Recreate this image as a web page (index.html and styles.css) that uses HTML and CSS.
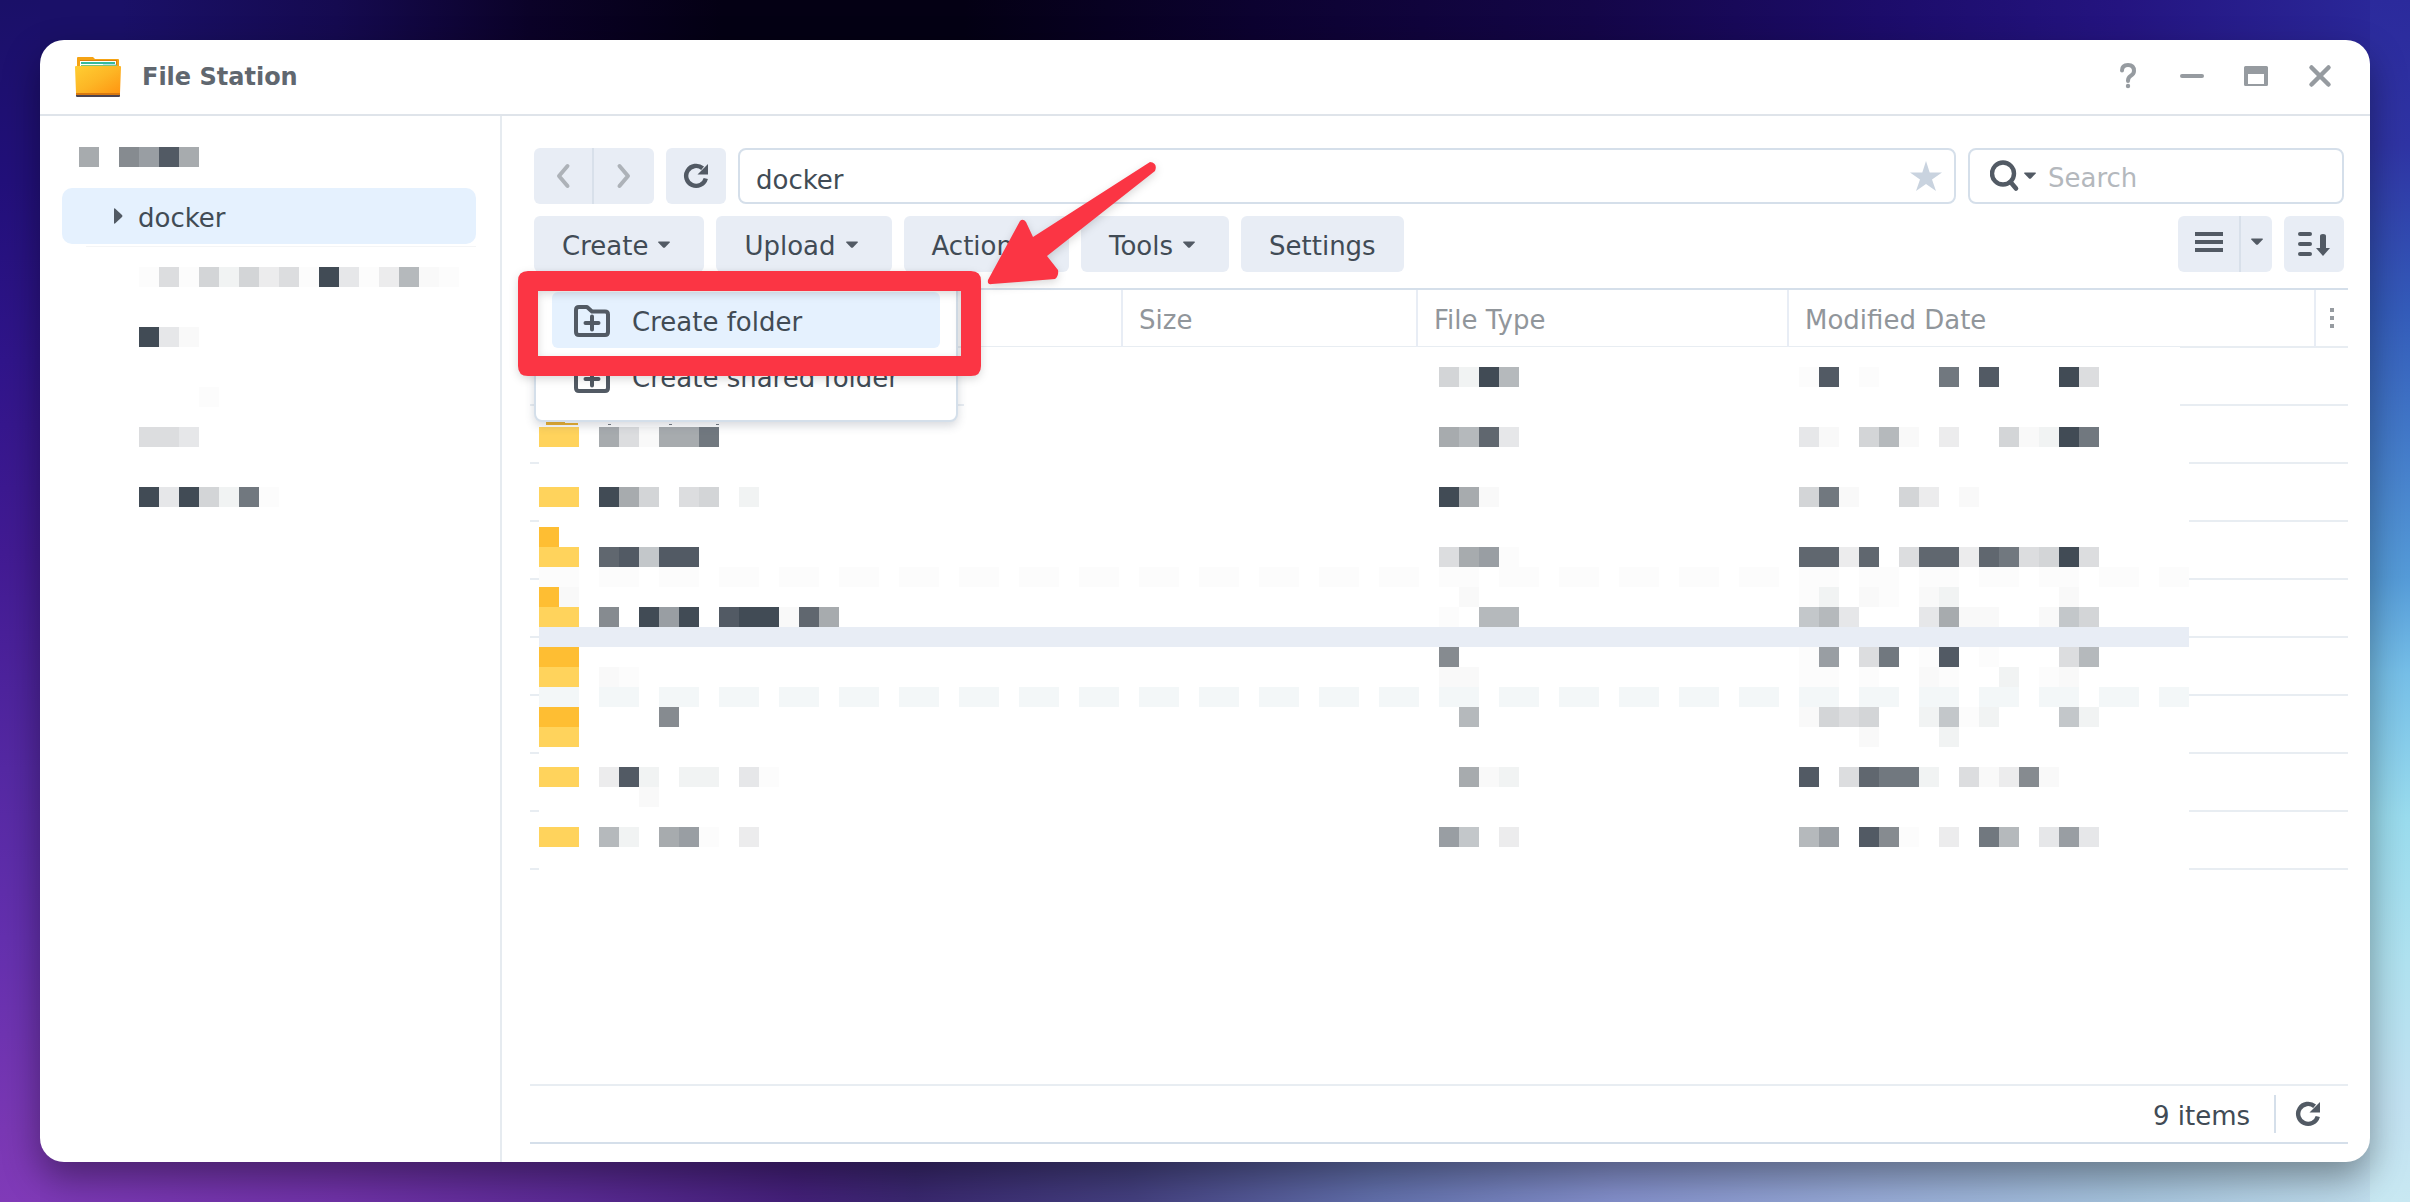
FILE: index.html
```html
<!DOCTYPE html>
<html lang="en">
<head>
<meta charset="utf-8">
<title>File Station</title>
<link rel="stylesheet" href="styles.css">
</head>
<body>
<svg class="defs" width="0" height="0" aria-hidden="true">
  <symbol id="caret" viewBox="0 0 12 8"><path d="M0 1.2Q0 .5 .8 .5H11.2Q12 .5 12 1.2L7.2 6.2Q6 7.2 4.8 6.2Z" fill="#525a64"/></symbol>
  <symbol id="reload" viewBox="0 0 26 26"><path d="M19.6 5.2A10 10 0 1 0 22.8 15.5" fill="none" stroke="#525a64" stroke-width="4.4"/><path d="M25 1V11.5H14.5Z" fill="#525a64"/></symbol>
  <symbol id="folder-plus" viewBox="0 0 36 32"><path d="M2 27V5Q2 2 5 2H13L18 6.500H31Q34 6.500 34 9.500V27Q34 30 31 30H5Q2 30 2 27Z" fill="none" stroke="#525a64" stroke-width="4" stroke-linejoin="round"/><path d="M18 11.500V24.500M11.500 18H24.500" stroke="#525a64" stroke-width="4" stroke-linecap="round"/></symbol>
</svg>

<div class="window">
  <header class="titlebar">
    <svg class="app-icon" viewBox="0 0 48 42" aria-hidden="true">
      <defs><linearGradient id="front" x1="0" y1="0" x2="1" y2="1"><stop offset="0" stop-color="#ffce33"/><stop offset=".5" stop-color="#fdb625"/><stop offset="1" stop-color="#ff9410"/></linearGradient></defs>
      <path d="M3 2Q3 1 4 1H19L21 3H44Q45 3 45 4V20H3Z" fill="#f5a314"/>
      <path d="M6 4H43V12H6Z" fill="#d97f0c"/>
      <path d="M6 5H42V12H6Z" fill="#fff"/><path d="M7 6H41V8H7Z" fill="#35b99b"/><path d="M7 9H43V12H7Z" fill="#7cc47a"/><path d="M29 8H42V9H29Z" fill="#b8e0ef"/>
      <path d="M2 37H46V40Q46 41 45 41H3Q2 41 2 40Z" fill="#4c4450"/>
      <path d="M1 11Q1 10 2 10H46Q47 10 47 11L46 37Q46 38 45 38H3Q2 38 2 37Z" fill="url(#front)"/>
      <path d="M2 37H46V39H2Z" fill="#d9790f"/>
    </svg>
    <h1 class="title">File Station</h1>
    <div class="controls">
      <button class="control" aria-label="Help"><svg viewBox="0 0 28 28"><path d="M8 8.500Q8 3 14 3T20 9Q20 12 16.500 14Q14 15.500 14 19" fill="none" stroke="#969ba0" stroke-width="4" stroke-linecap="round"/><circle cx="14" cy="24" r="2.200" fill="#969ba0"/></svg></button>
      <button class="control" aria-label="Minimize"><svg viewBox="0 0 28 28"><path d="M4 14H24" stroke="#969ba0" stroke-width="4" stroke-linecap="round"/></svg></button>
      <button class="control" aria-label="Maximize"><svg viewBox="0 0 28 28"><path fill-rule="evenodd" d="M3.500 4H24.500Q26 4 26 5.500V22.500Q26 24 24.500 24H3.500Q2 24 2 22.500V5.500Q2 4 3.500 4ZM6 12V22H22V12Z" fill="#969ba0"/></svg></button>
      <button class="control" aria-label="Close"><svg viewBox="0 0 28 28"><path d="M5.500 5.500L22.500 22.500M22.500 5.500L5.500 22.500" stroke="#969ba0" stroke-width="4.500" stroke-linecap="round"/></svg></button>
    </div>
  </header>

  <div class="content">
    <nav class="sidebar" aria-label="Folders">
      <svg class="mosaic root-name" width="120" height="20" data-mosaic="root"></svg>
      <a class="tree-item" href="#docker"><svg class="tree-arrow" viewBox="0 0 9 16" aria-hidden="true"><path d="M0 1Q0 0 1 .5L8 7Q9 8 8 9L1 15.500Q0 16 0 15Z" fill="#525a64"/></svg>docker</a>
      <div class="tree-line"></div>
      <svg class="mosaic child-names" width="320" height="240" data-mosaic="children"></svg>
    </nav>

    <main class="main">
      <div class="bar">
        <div class="split">
          <button class="icon-btn" aria-label="Back" disabled><svg width="16" height="26" viewBox="0 0 16 26"><path d="M12.500 3L4 13L12.500 23" fill="none" stroke="#adb2b8" stroke-width="4" stroke-linecap="round" stroke-linejoin="round"/></svg></button>
          <button class="icon-btn" aria-label="Forward" disabled><svg width="16" height="26" viewBox="0 0 16 26"><path d="M3.500 3L12 13L3.500 23" fill="none" stroke="#adb2b8" stroke-width="4" stroke-linecap="round" stroke-linejoin="round"/></svg></button>
        </div>
        <button class="icon-btn" aria-label="Refresh"><svg width="26" height="26"><use href="#reload"/></svg></button>
        <div class="field path">
          <input type="text" class="input" value="docker" aria-label="Path">
          <button class="star" aria-label="Add to favorites"><svg width="32" height="30" viewBox="0 0 32 30"><path d="M16 0L19.700 11.500H32L22 18.500L26 30L16 23L6 30L10 18.500L0 11.500H12.300Z" fill="#c9d3df"/></svg></button>
        </div>
        <div class="field search">
          <button class="search-btn" aria-label="Search options"><svg width="30" height="32" viewBox="0 0 30 32"><circle cx="13" cy="13.500" r="11" fill="none" stroke="#525a64" stroke-width="4.400"/><path d="M20.500 22L26 28.500" stroke="#525a64" stroke-width="4.600" stroke-linecap="round"/></svg><svg width="12" height="8"><use href="#caret"/></svg></button>
          <input type="text" class="input" placeholder="Search" aria-label="Search">
        </div>
      </div>

      <div class="bar">
        <div class="menu-wrap">
          <button class="btn">Create<svg class="caret"><use href="#caret"/></svg></button>
          <div class="menu">
            <button class="menu-item active"><svg width="36" height="32"><use href="#folder-plus"/></svg>Create folder</button>
            <button class="menu-item"><svg width="36" height="32"><use href="#folder-plus"/></svg>Create shared folder</button>
          </div>
        </div>
        <button class="btn">Upload<svg class="caret"><use href="#caret"/></svg></button>
        <button class="btn">Action<svg class="caret"><use href="#caret"/></svg></button>
        <button class="btn">Tools<svg class="caret"><use href="#caret"/></svg></button>
        <button class="btn">Settings</button>
        <div class="split view">
          <button class="icon-btn" aria-label="List view"><svg width="28" height="20" viewBox="0 0 28 20"><path d="M0 2H28M0 10H28M0 18H28" stroke="#525a64" stroke-width="4"/></svg></button>
          <button class="icon-btn narrow" aria-label="Choose view"><svg width="12" height="8"><use href="#caret"/></svg></button>
        </div>
        <button class="icon-btn" aria-label="Sort"><svg width="32" height="26" viewBox="0 0 32 26"><path d="M2 3H12M2 13H12M2 23H12" stroke="#525a64" stroke-width="4" stroke-linecap="round"/><path d="M22 5Q22 3 25 3T28 5V17H32L25 25L18 17H22Z" fill="#525a64"/></svg></button>
      </div>

      <div class="list">
        <table class="files">
          <colgroup><col class="c-name"><col class="c-size"><col class="c-type"><col class="c-date"><col class="c-more"></colgroup>
          <thead><tr>
            <th aria-label="Name"></th><th>Size</th><th>File Type</th><th>Modified Date</th>
            <th class="more"><svg width="4" height="20" viewBox="0 0 4 20" role="img" aria-label="Columns"><path d="M0 0H4V4H0ZM0 8H4V12H0ZM0 16H4V20H0Z" fill="#969ba0"/></svg></th>
          </tr></thead>
          <tbody>
            <tr><td colspan="5"></td></tr><tr><td colspan="5"></td></tr><tr><td colspan="5"></td></tr>
            <tr><td colspan="5"></td></tr><tr><td colspan="5"></td></tr><tr><td colspan="5"></td></tr>
            <tr><td colspan="5"></td></tr><tr><td colspan="5"></td></tr><tr><td colspan="5"></td></tr>
          </tbody>
        </table>
        <svg class="mosaic file-names" width="1650" height="540" data-mosaic="files">
          <path d="M425 0H1641V80H1650V540H0V80H425Z" fill="#fff"/>
          <path d="M7 74H24L26 76H39V78H7Z" fill="#e9ae2c"/>
          <path d="M69 77H72M130 77H133M177 77H180" stroke="#71787f" stroke-width="1"/>
        </svg>
      </div>

      <footer class="status">
        <span class="count">9 items</span>
        <button class="reload" aria-label="Reload"><svg width="26" height="26"><use href="#reload"/></svg></button>
      </footer>

      <svg class="annotation" width="680" height="280" viewBox="0 0 680 280" aria-hidden="true">
        <path fill-rule="evenodd" d="M26 155H469Q479 155 479 165V250Q479 260 469 260H26Q16 260 16 250V165Q16 155 26 155ZM36 175V240H459V175Z"/>
        <path d="M648 46Q656 47 653 55L545 140L556 154Q557 160 553 163L490 168Q485 169 486 164L518 105Q521 102 524 106L531 121Z"/>
      </svg>
    </main>
  </div>
</div>
<script src="mosaic.js"></script>
</body>
</html>
```
FILE: styles.css
```css
* { box-sizing: border-box; }

body {
  margin: 0;
  min-height: 100vh;
  padding: 40px;
  display: flex;
  font-family: "DejaVu Sans", Verdana, sans-serif;
  font-size: 26px;
  line-height: 32px;
  color: #414b55;
  background:
    linear-gradient(180deg, #1a1068, #22107a 15%, #30158a 30%, #421b93 46%, #5529a3 64%, #6430ae 78%, #7a38b4 94%, #803ab8) left top / 40px 100% no-repeat,
    linear-gradient(180deg, #2b2a9c, #2f34a4 12%, #345cba 26%, #4278c8 36%, #559bd8 48%, #76bfe8 56%, #9adcee 68%, #b0e2f0 80%, #c2e2f2 92%, #c8e8f2) right top / 40px 100% no-repeat,
    linear-gradient(90deg, #1a1068, #1a1068 5%, #150a50 14%, #0b0228 22%, #040014 30%, #040014 40%, #0c0230 52%, #140648 66%, #1c0c6a 78%, #241480 88%, #2b2a9c) left top / 100% 50% no-repeat,
    linear-gradient(90deg, #7e3ab8, #7032a8 14%, #5a2a94 24%, #44207a 33%, #3a2870 38%, #444080 47%, #6270ac 57%, #8490cc 67%, #98acd8 78%, #a6c4de 88%, #c4e2f0) left bottom / 100% 50% no-repeat;
}

h1 { margin: 0; }

button, input {
  margin: 0;
  padding: 0;
  border: 0;
  background: none;
  font: inherit;
  color: inherit;
}

svg { display: block; flex: none; }
.defs { position: absolute; }

.window {
  flex: 1;
  min-width: 0;
  display: flex;
  flex-direction: column;
  background: #fff;
  border-radius: 24px;
  box-shadow: 0 16px 36px rgba(0, 0, 0, .38);
}

.titlebar {
  display: flex;
  align-items: center;
  height: 76px;
  padding: 0 34px;
  border-bottom: 2px solid #dfe4ea;
}
.app-icon { width: 48px; height: 42px; }
.title {
  flex: 1;
  margin-left: 20px;
  font-size: 24px;
  color: #60676f;
}
.controls { display: flex; gap: 36px; margin: 0 2px 2px 0; }
.control { width: 28px; height: 28px; }

.content { flex: 1; display: flex; }

.sidebar {
  width: 462px;
  flex: none;
  padding: 31px 24px 0 22px;
  border-right: 2px solid #e6ebf0;
}
.root-name { margin-left: 17px; }
.tree-item {
  display: flex;
  align-items: center;
  gap: 15px;
  height: 56px;
  margin-top: 21px;
  padding: 3px 0 0 52px;
  border-radius: 10px;
  background: #e5f1fe;
  color: inherit;
  text-decoration: none;
}
.tree-arrow { width: 9px; height: 16px; margin-bottom: 4px; }
.tree-line { height: 1px; margin: 2px 0 0 24px; background: #f4f5f6; }
.child-names { margin: 20px 0 0 77px; }

.main {
  position: relative;
  flex: 1;
  min-width: 0;
  display: flex;
  flex-direction: column;
  padding: 32px 22px 18px 28px;
}

.bar { display: flex; gap: 12px; margin: 0 4px 12px; }
.split { display: flex; }
.btn, .icon-btn {
  display: flex;
  align-items: center;
  justify-content: center;
  height: 56px;
  border-radius: 6px;
  background: #e8edf5;
}
.btn { gap: 10px; padding: 3px 28px 0; }
.caret { width: 12px; height: 8px; margin: 0 6px 2px 0; }
.icon-btn { width: 60px; }
.split .icon-btn:first-child { border-radius: 6px 0 0 6px; border-right: 2px solid #d8e0ea; }
.split .icon-btn:last-child { border-radius: 0 6px 6px 0; }
.view { margin-left: auto; }
.view .icon-btn:first-child { width: 63px; }
.view .narrow { width: 31px; }
.view svg { margin-bottom: 4px; }

.field {
  display: flex;
  align-items: center;
  height: 56px;
  border: 2px solid #d5dfea;
  border-radius: 8px;
}
.path { flex: 1; padding: 0 12px 0 16px; }
.path .input { padding-top: 7px; }
.search { width: 376px; padding: 0 20px; }
.input { flex: 1; min-width: 0; height: 100%; padding-top: 3px; outline: none; }
.input::placeholder { color: #b4b8bd; opacity: 1; }
.search-btn { display: flex; align-items: center; gap: 4px; margin-right: 12px; }

.menu-wrap { position: relative; }
.menu {
  position: absolute;
  z-index: 2;
  left: 0;
  top: 58px;
  width: 424px;
  padding: 16px;
  border: 2px solid #d4dfea;
  border-radius: 8px;
  background: #fff;
  box-shadow: 0 4px 10px rgba(60, 70, 90, .2);
}
.menu-item {
  display: flex;
  align-items: center;
  gap: 22px;
  width: 100%;
  height: 56px;
  padding: 3px 22px 0;
  border-radius: 6px;
  white-space: nowrap;
}
.menu-item svg { margin-bottom: 2px; }
.menu-item.active { background: #e5f1fe; }

.list { position: relative; flex: 1; margin-top: 4px; }
.files {
  width: 100%;
  table-layout: fixed;
  border-collapse: separate;
  border-spacing: 0;
  border-top: 2px solid #d5dfea;
}
.c-name { width: 593px; }
.c-size { width: 295px; }
.c-type { width: 371px; }
.c-more { width: 32px; }
.files th {
  height: 58px;
  padding: 4px 16px 0;
  border-right: 2px solid #e8edf5;
  border-bottom: 2px solid #e8edf2;
  font-weight: 400;
  text-align: left;
  color: #91969b;
}
.files th.more { padding: 0 0 0 14px; border-right: 0; }
.files td { height: 58px; padding: 0; border-bottom: 2px solid #e8edf2; }

.mosaic { shape-rendering: crispEdges; }
.file-names { position: absolute; left: 9px; top: 59px; }

.status {
  display: flex;
  align-items: center;
  justify-content: flex-end;
  height: 60px;
  padding-right: 27px;
  border-top: 2px solid #e8edf2;
  border-bottom: 2px solid #d5dfea;
}
.count { padding-top: 3px; }
.reload {
  display: flex;
  align-items: center;
  height: 38px;
  margin-left: 24px;
  padding-left: 19px;
  border-left: 2px solid #d5dfea;
}

.annotation {
  position: absolute;
  z-index: 3;
  left: 0;
  top: 0;
  fill: #fb3544;
  pointer-events: none;
  filter: drop-shadow(0 3px 4px rgba(0, 0, 0, .15));
}
```
FILE: mosaic.js
```js
// Redacted names: every letter is one 20px cell, keyed to the palette.
const palette = {
  Z: '#414b55', Y: '#525a64', X: '#60676f', W: '#71787f', V: '#868b90', U: '#999ea3',
  T: '#a7abae', S: '#b5b9bc', R: '#c3c7ca', Q: '#d3d5d7', P: '#dcdddf', O: '#e6e7e9',
  N: '#ececed', M: '#f1f3f3', L: '#f9f9f9', K: '#fcfcfc',
  o: '#febe33', y: '#ffd35c', b: '#e8edf5', d: '#f3f7f8'
};

// Each entry is [row, column, cells].
const mosaics = {
  root: [[0, 0, 'T.VUYT']],
  children: [
    [0, 0, 'KPKQMQNPKZOKNSLK'], [3, 0, 'ZOL'], [6, 3, 'K'], [8, 0, 'PPO'], [11, 0, 'ZOZQMWK']
  ],
  files: [
    [1, 45, 'QMZS'], [1, 63, 'KY.K...W.Y...ZP'],
    [4, 0, 'yy.TPLTTW'], [4, 45, 'TSXO'], [4, 63, 'OL.QSL.N..QLMZW'],
    [7, 0, 'yy.ZTQ.PQ.M'], [7, 45, 'ZTL'], [7, 63, 'QWL..QN.L'],
    [9, 0, 'o'],
    [10, 0, 'yy.XYRYY'], [10, 45, 'PTUK'], [10, 63, 'XXNX.PXXNXWPQZP'],
    [11, 0, 'KK.'.repeat(28)],
    [12, 0, 'oL'], [12, 46, 'L'], [12, 63, 'KM.LK.LM.....L'],
    [13, 0, 'yy.V.ZUZ.YZZLXT'], [13, 45, 'K.SS'], [13, 63, 'RSO...OTLL..LRQ'],
    [14, 0, 'b'.repeat(83)],
    [15, 0, 'oo'], [15, 45, 'V'], [15, 63, 'KU.PW.KY.K...PS'],
    [16, 0, 'yy.LK'], [16, 45, 'LL'], [16, 63, 'KK.K..LK..M.KL'],
    [17, 0, 'dd.'.repeat(28)],
    [18, 0, 'oo....V'], [18, 46, 'S'], [18, 63, 'LQPQ..MRKM...RM'],
    [19, 0, 'yy'], [19, 66, 'L...M'],
    [21, 0, 'yy.NYM.MM.OK'], [21, 46, 'TLM'], [21, 63, 'Y.PXWWM.PLNVL'],
    [22, 5, 'L'],
    [24, 0, 'yy.SM.TUK.N'], [24, 45, 'UR.N'], [24, 63, 'SU.YVK.N.WS.OUO']
  ]
};

const size = 20;
for (const svg of document.querySelectorAll('[data-mosaic]')) {
  for (const [row, column, cells] of mosaics[svg.dataset.mosaic]) {
    [...cells].forEach((cell, i) => {
      if (!palette[cell]) return;
      const rect = document.createElementNS('http://www.w3.org/2000/svg', 'rect');
      rect.setAttribute('x', (column + i) * size);
      rect.setAttribute('y', row * size);
      rect.setAttribute('width', size);
      rect.setAttribute('height', size);
      rect.setAttribute('fill', palette[cell]);
      svg.append(rect);
    });
  }
}
```
